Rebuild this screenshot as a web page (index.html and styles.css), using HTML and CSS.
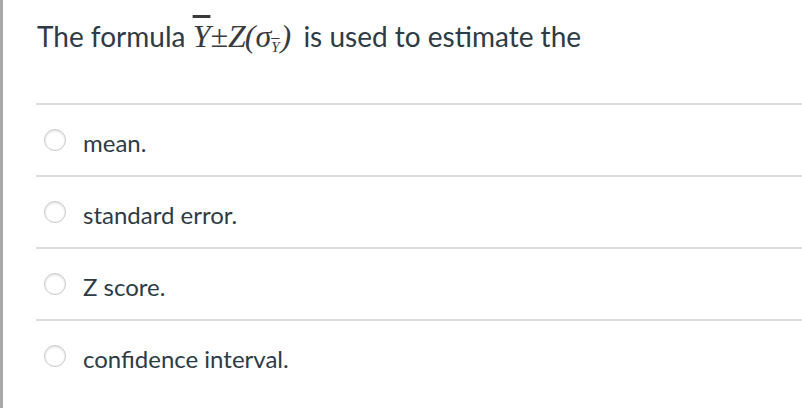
FILE: index.html
```html
<!DOCTYPE html>
<html>
<head>
<meta charset="utf-8">
<link rel="stylesheet" href="styles.css">
</head>
<body>
<div class="page">
  <div class="question">
    <div class="stem">The formula <span class="formula"><span class="ybar">Y</span>±<span class="zz">Z</span>(<span class="sig">σ</span><sub class="sub"><span class="ybar small">Y</span></sub>)</span> is used to estimate the</div>
    <div class="answers">
      <label class="answer"><span class="radio"></span><span class="atext">mean.</span></label>
      <label class="answer"><span class="radio"></span><span class="atext">standard error.</span></label>
      <label class="answer"><span class="radio"></span><span class="atext">Z score.</span></label>
      <label class="answer"><span class="radio"></span><span class="atext">confidence interval.</span></label>
    </div>
  </div>
</div>
</body>
</html>
```

FILE: styles.css
```css
html, body {
  margin: 0;
  padding: 0;
  background: #fff;
}
.page {
  border-left: 3px solid #a8a8a8;
  min-height: 408px;
  box-sizing: border-box;
  padding-left: 33px;
  font-family: Lato, "Liberation Sans", sans-serif;
  color: #2d3b45;
}
.stem {
  font-size: 28px;
  padding-top: 18px;
  height: 103px;
  box-sizing: border-box;
  line-height: 36px;
  padding-left: 1px;
}
.formula {
  font-family: "Liberation Serif", serif;
  font-style: italic;
  color: #3a3a3a;
  font-size: 32px;
  margin: 0 5px 0 0;
}
.zz {
  letter-spacing: -1px;
}
.ybar {
  text-decoration: overline;
}
.sub {
  font-size: 15px;
  vertical-align: -5px;
  margin-right: 1px;
}
.answers {
  border-top: 2px solid #dcdcdc;
}
.answer {
  display: flex;
  align-items: center;
  height: 70px;
  border-bottom: 2px solid #dcdcdc;
  padding-left: 8px;
}
.answer:last-child {
  border-bottom: none;
}
.radio {
  width: 20px;
  height: 20px;
  border-radius: 50%;
  border: 1px solid #c8c8c8;
  box-shadow: inset 0 1px 2px rgba(0,0,0,0.15);
  background: #fff;
  flex: none;
}
.atext {
  font-size: 24px;
  margin-left: 17px;
  padding-top: 4px;
}
```
